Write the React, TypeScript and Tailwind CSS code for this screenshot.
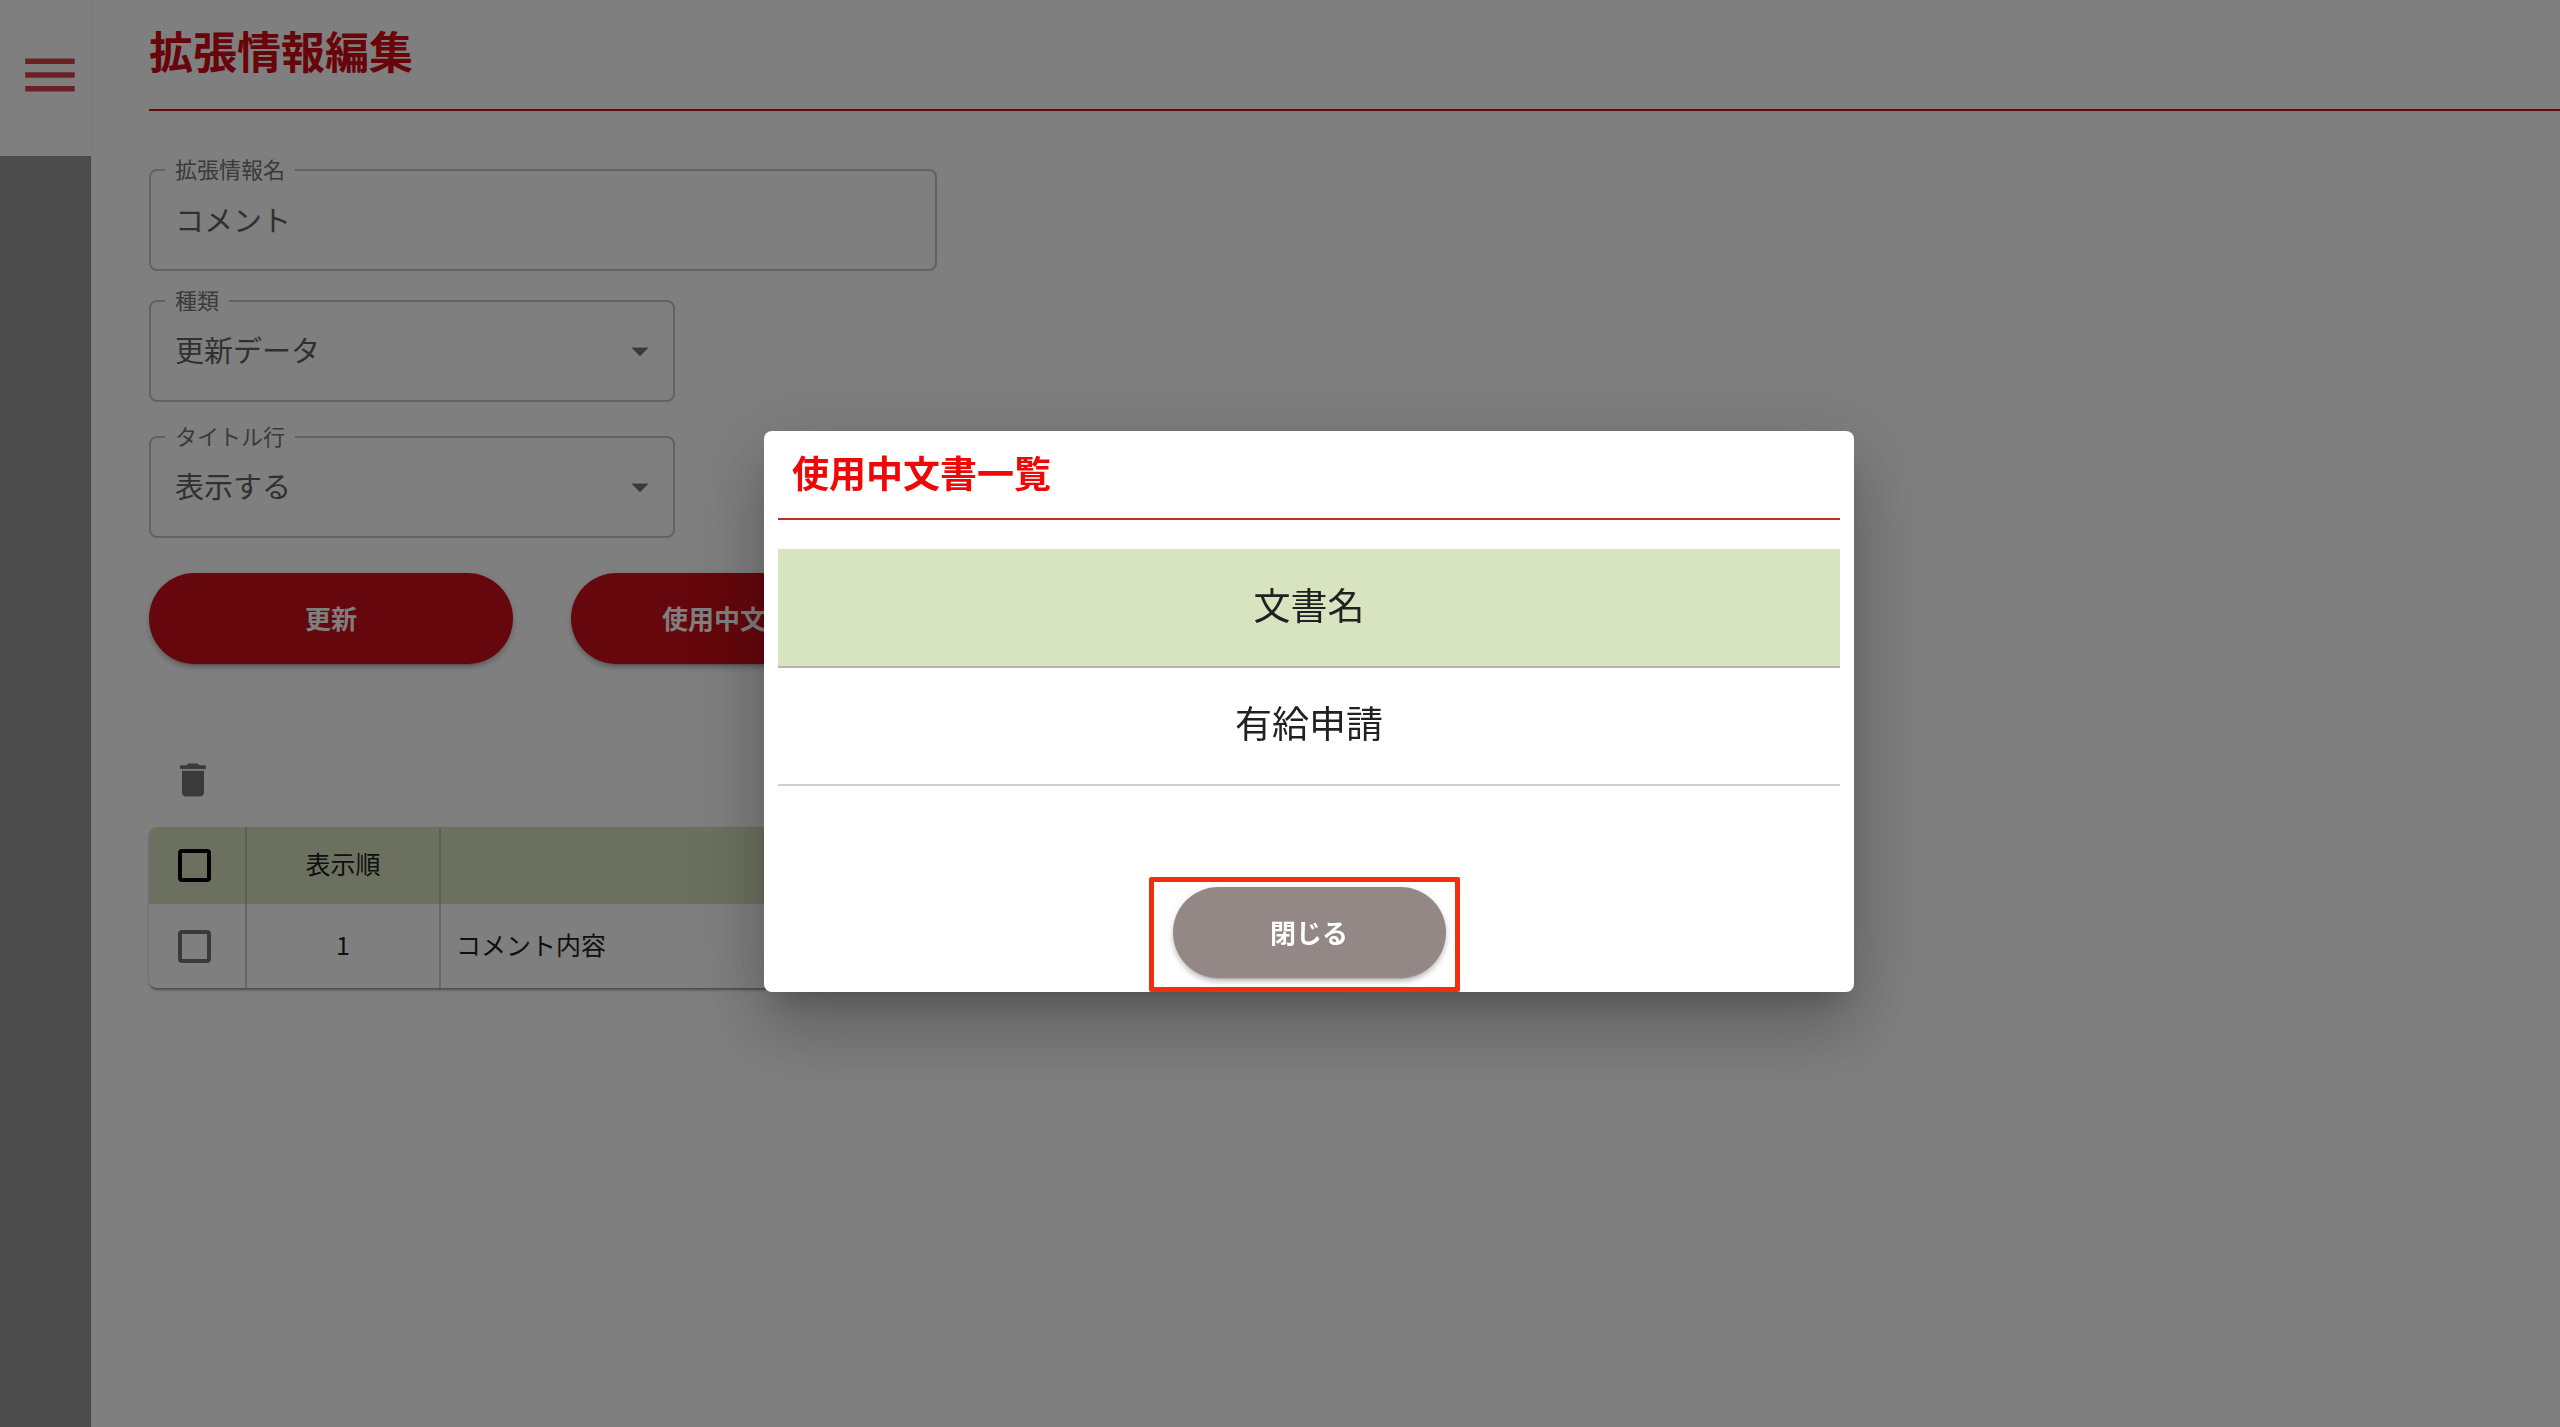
import { useState } from 'react';
import type { ReactNode } from 'react';
import { MdArrowDropDown, MdDelete, MdMenu } from 'react-icons/md';

interface ExtensionRow {
  order: number;
  name: string;
}

const rows: ExtensionRow[] = [{ order: 1, name: 'コメント内容' }];

const documents = ['有給申請'];

function OutlinedField({ id, label, className, children }: { id: string; label: string; className: string; children: ReactNode }) {
  return (
    <fieldset className={`relative min-w-0 rounded-lg border-2 border-[#c4c4c4] px-3.5 ${className}`}>
      <legend className="px-2.5 pb-1 text-[22px] leading-7 text-[#757575]">
        <label htmlFor={id}>{label}</label>
      </legend>
      {children}
    </fieldset>
  );
}

function SelectField({ id, label, options }: { id: string; label: string; options: string[] }) {
  return (
    <OutlinedField id={id} label={label} className="w-[526px]">
      <select
        id={id}
        className="block h-[83px] w-full appearance-none bg-transparent px-2.5 pb-[18px] text-[29px] text-[#616161] outline-none"
      >
        {options.map((option) => (
          <option key={option}>{option}</option>
        ))}
      </select>
      <MdArrowDropDown className="pointer-events-none absolute right-3 top-[13px] size-[42px] text-[#757575]" />
    </OutlinedField>
  );
}

function PillButton({ className, onClick, children }: { className: string; onClick?: () => void; children: ReactNode }) {
  return (
    <button
      type="button"
      onClick={onClick}
      className={`h-[91px] rounded-full pb-[3px] text-[26px] font-bold text-white shadow-[0_5px_2px_-4px_rgba(0,0,0,0.2),0_4px_4px_0_rgba(0,0,0,0.14),0_2px_9px_0_rgba(0,0,0,0.12)] ${className}`}
    >
      {children}
    </button>
  );
}

function Checkbox({ label, className }: { label: string; className: string }) {
  return (
    <input
      type="checkbox"
      aria-label={label}
      className={`block size-[33px] appearance-none rounded-sm border-4 ${className}`}
    />
  );
}

export default function App() {
  const [open, setOpen] = useState(true);

  return (
    <div className="flex min-h-screen bg-white font-['Noto_Sans_CJK_JP',sans-serif] text-[#212121]">
      <aside className="flex w-[91px] shrink-0 flex-col bg-[#999]">
        <div className="flex h-[156px] items-start justify-end bg-white pr-2 pt-[42px]">
          <button type="button" aria-label="メニュー" className="text-[#d6444c]">
            <MdMenu className="size-[66px]" />
          </button>
        </div>
      </aside>

      <main className="min-w-0 flex-1 border-l border-[#f5f5f5] pl-[57px]">
        <h1 className="border-b-2 border-[#c4161e] pb-[26px] pt-[18px] text-[44px] font-bold leading-[65px] text-[#d00a14]">
          拡張情報編集
        </h1>

        <form className="mt-[43px] flex flex-col">
          <OutlinedField id="ext-name" label="拡張情報名" className="w-[788px]">
            <input
              id="ext-name"
              type="text"
              defaultValue="コメント"
              className="block h-[83px] w-full bg-transparent px-2.5 pb-[18px] text-[29px] text-[#616161] outline-none"
            />
          </OutlinedField>
          <div className="mt-3.5">
            <SelectField id="ext-type" label="種類" options={['更新データ']} />
          </div>
          <div className="mt-[19px]">
            <SelectField id="ext-title" label="タイトル行" options={['表示する']} />
          </div>
          <div className="mt-[35px] flex gap-[58px]">
            <PillButton className="w-[364px] bg-[#cb0e18]">更新</PillButton>
            <PillButton className="w-[364px] bg-[#cb0e18]" onClick={() => setOpen(true)}>
              使用中文書一覧
            </PillButton>
          </div>
        </form>

        <div className="mt-[94px] pl-[22px]">
          <button type="button" aria-label="削除" className="block text-[#757575]">
            <MdDelete className="size-[44px]" />
          </button>
        </div>

        <div className="mt-[25px] w-[1200px] overflow-hidden rounded-lg shadow-[0_4px_2px_-2px_rgba(0,0,0,0.2),0_2px_2px_0_rgba(0,0,0,0.14),0_2px_5px_0_rgba(0,0,0,0.12)]">
          <table className="w-full table-fixed border-collapse text-[25px]">
            <colgroup>
              <col className="w-[97px]" />
              <col className="w-[194px]" />
              <col />
            </colgroup>
            <thead>
              <tr className="h-[77px] bg-[#d8e3bf]">
                <th className="border-r-2 border-black/15 pl-[29px]">
                  <Checkbox label="すべて選択" className="border-black" />
                </th>
                <th className="border-r-2 border-black/15 pb-[3px] font-normal">表示順</th>
                <th />
              </tr>
            </thead>
            <tbody>
              {rows.map((row) => (
                <tr key={row.order} className="h-[84px]">
                  <td className="border-r-2 border-black/20 pl-[29px]">
                    <Checkbox label={`${row.name}を選択`} className="border-[#757575]" />
                  </td>
                  <td className="border-r-2 border-black/20 pb-[3px] text-center">{row.order}</td>
                  <td className="px-[15px] pb-[3px]">{row.name}</td>
                </tr>
              ))}
            </tbody>
          </table>
        </div>
      </main>

      {open && (
        <div className="fixed inset-0 flex items-center justify-center bg-black/50 pb-1 pl-[58px]">
          <div
            role="dialog"
            aria-modal="true"
            aria-labelledby="dialog-title"
            className="w-[1090px] rounded-lg bg-white px-3.5 pb-3.5 shadow-[0_20px_27px_-13px_rgba(0,0,0,0.2),0_43px_68px_5px_rgba(0,0,0,0.14),0_16px_83px_14px_rgba(0,0,0,0.12)]"
          >
            <h2
              id="dialog-title"
              className="border-b-2 border-[#c62828] px-3.5 pb-[18px] pt-3.5 text-[37px] font-bold leading-[55px] text-[#ee0808]"
            >
              使用中文書一覧
            </h2>
            <table className="mt-[29px] w-full text-center text-[37px]">
              <thead>
                <tr className="h-[118px] bg-[#d8e3bf]">
                  <th className="border-b-2 border-[#b4bba4] pb-1.5 font-normal">文書名</th>
                </tr>
              </thead>
              <tbody>
                {documents.map((name) => (
                  <tr key={name} className="h-[118px]">
                    <td className="border-b-2 border-[#d0d0d0] pb-1.5">{name}</td>
                  </tr>
                ))}
              </tbody>
            </table>
            <div className="mt-[101px] flex justify-center">
              <div className="relative">
                <PillButton className="block w-[273px] bg-[#938886]" onClick={() => setOpen(false)}>
                  閉じる
                </PillButton>
                <div className="pointer-events-none absolute -bottom-3.5 -left-6 -right-3.5 -top-2.5 rounded-xs border-5 border-[#f42d0c]" />
              </div>
            </div>
          </div>
        </div>
      )}
    </div>
  );
}
